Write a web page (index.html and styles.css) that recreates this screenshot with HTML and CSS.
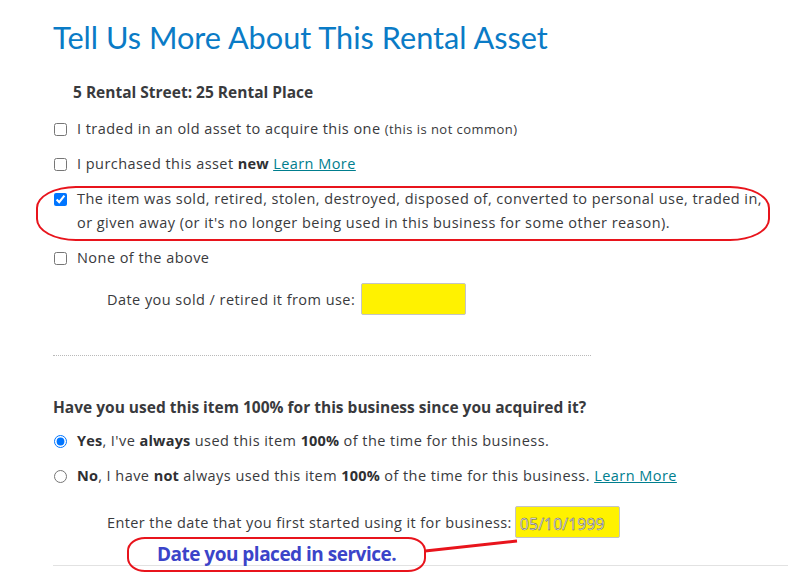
FILE: index.html
```html
<!DOCTYPE html>
<html lang="en">

<head>
  <meta charset="UTF-8" />
  <title>Tell Us More About This Rental Asset</title>
  <link rel="stylesheet" href="styles.css">
</head>

<body>
  <div class="page">
    <h1 class="title">Tell Us More About This Rental Asset</h1>
    <div class="asset-name">5 Rental Street: 25 Rental Place</div>

    <div class="options">
      <label class="option">
        <input type="checkbox" />
        <span>I traded in an old asset to acquire this one <small>(this is not common)</small></span>
      </label>
      <label class="option">
        <input type="checkbox" />
        <span>I purchased this asset <b>new</b> <a href="#">Learn More</a></span>
      </label>
      <label class="option">
        <input type="checkbox" checked />
        <span>The item was sold, retired, stolen, destroyed, disposed of, converted to personal use, traded in, or given away (or it's no longer being used in this business for some other reason).</span>
      </label>
      <label class="option">
        <input type="checkbox" />
        <span>None of the above</span>
      </label>
    </div>

    <div class="date-row">
      <span>Date you sold / retired it from use:</span>
      <input type="text" class="date-input" value="" />
    </div>

    <div class="divider"></div>

    <h3 class="question">Have you used this item 100% for this business since you acquired it?</h3>
    <div class="options radios">
      <label class="option">
        <input type="radio" name="use" checked />
        <span><b>Yes</b>, I've <b>always</b> used this item <b>100%</b> of the time for this business.</span>
      </label>
      <label class="option">
        <input type="radio" name="use" />
        <span><b>No</b>, I have <b>not</b> always used this item <b>100%</b> of the time for this business. <a href="#">Learn More</a></span>
      </label>
    </div>

    <div class="date-row date-row-2">
      <span>Enter the date that you first started using it for business:</span>
      <input type="text" class="date-input filled" value="05/10/1999" />
    </div>

    <div class="bottom-line"></div>
  </div>

  <!-- annotations drawn over the page -->
  <div class="mark mark-ellipse"></div>
  <div class="mark mark-note">Date you placed in service.</div>
  <svg class="mark-line" width="100" height="20" viewBox="0 0 100 20">
    <line x1="0" y1="14" x2="92" y2="4" stroke="#e8141c" stroke-width="3" />
  </svg>
</body>

</html>
```

FILE: styles.css
```css
body {
  font-family: "Open Sans", "Noto Sans", sans-serif;
  color: #393a3d;
  background: #fff;
  margin: 0;
  position: relative;
  height: 575px;
  overflow: hidden;
}

.page {
  padding: 18px 0 0 53px;
}

.title {
  margin: 0;
  font-family: Lato, sans-serif;
  font-size: 30.7px;
  font-weight: 400;
  color: #0a7bc6;
  line-height: 40px;
}

.asset-name {
  margin: 23px 0 0 20px;
  font-size: 15.5px;
  font-weight: bold;
  line-height: 22px;
}

.options {
  margin-top: 14px;
  display: flex;
  flex-direction: column;
  gap: 11px;
  max-width: 720px;
}

.option {
  display: flex;
  align-items: flex-start;
  gap: 10px;
  font-size: 14.5px;
  letter-spacing: 0.45px;
  line-height: 24px;
}

.option input {
  margin: 6px 0 0 1px;
  width: 13px;
  height: 13px;
  flex-shrink: 0;
}

.option small {
  font-size: 13px;
}

.option b {
  color: #2f3033;
  letter-spacing: 0.2px;
}

a {
  color: #007e8e;
  text-decoration: underline;
}

.date-row {
  display: flex;
  align-items: center;
  gap: 6px;
  margin: 13px 0 0 54px;
  font-size: 14.5px;
  letter-spacing: 0.45px;
}

.date-input {
  width: 105px;
  height: 32px;
  box-sizing: border-box;
  background: #fff200;
  border: 1px solid #c4c4c4;
  border-radius: 2px;
  padding: 4px 4px 0;
  font-family: inherit;
  font-size: 16px;
  letter-spacing: 0;
  color: #fff;
  -webkit-text-stroke: 0.5px #50505e;
}

.divider {
  margin-top: 40px;
  width: 538px;
  border-top: 1px dotted #b9b9b9;
}

.question {
  margin: 40px 0 0;
  font-size: 15.5px;
  line-height: 22px;
  font-weight: bold;
}

.radios {
  margin-top: 11px;
  gap: 11px;
}

.date-row-2 {
  margin-top: 18px;
  gap: 3px;
  letter-spacing: 0.4px;
}

.bottom-line {
  margin-top: 27px;
  border-top: 1px solid #e2e2e2;
}

.mark {
  position: absolute;
  border: 2px solid #e8141c;
  box-sizing: border-box;
}

.mark-ellipse {
  left: 36px;
  top: 186px;
  width: 734px;
  height: 55px;
  border-radius: 40px / 22px;
}

.mark-note {
  left: 127px;
  top: 537px;
  width: 299px;
  height: 35px;
  border-radius: 18px / 14px;
  font-family: "Open Sans", sans-serif;
  font-weight: bold;
  font-size: 19px;
  letter-spacing: -0.5px;
  color: #3b44c9;
  text-align: center;
  line-height: 31px;
}

.mark-line {
  position: absolute;
  left: 425px;
  top: 537px;
}
```
